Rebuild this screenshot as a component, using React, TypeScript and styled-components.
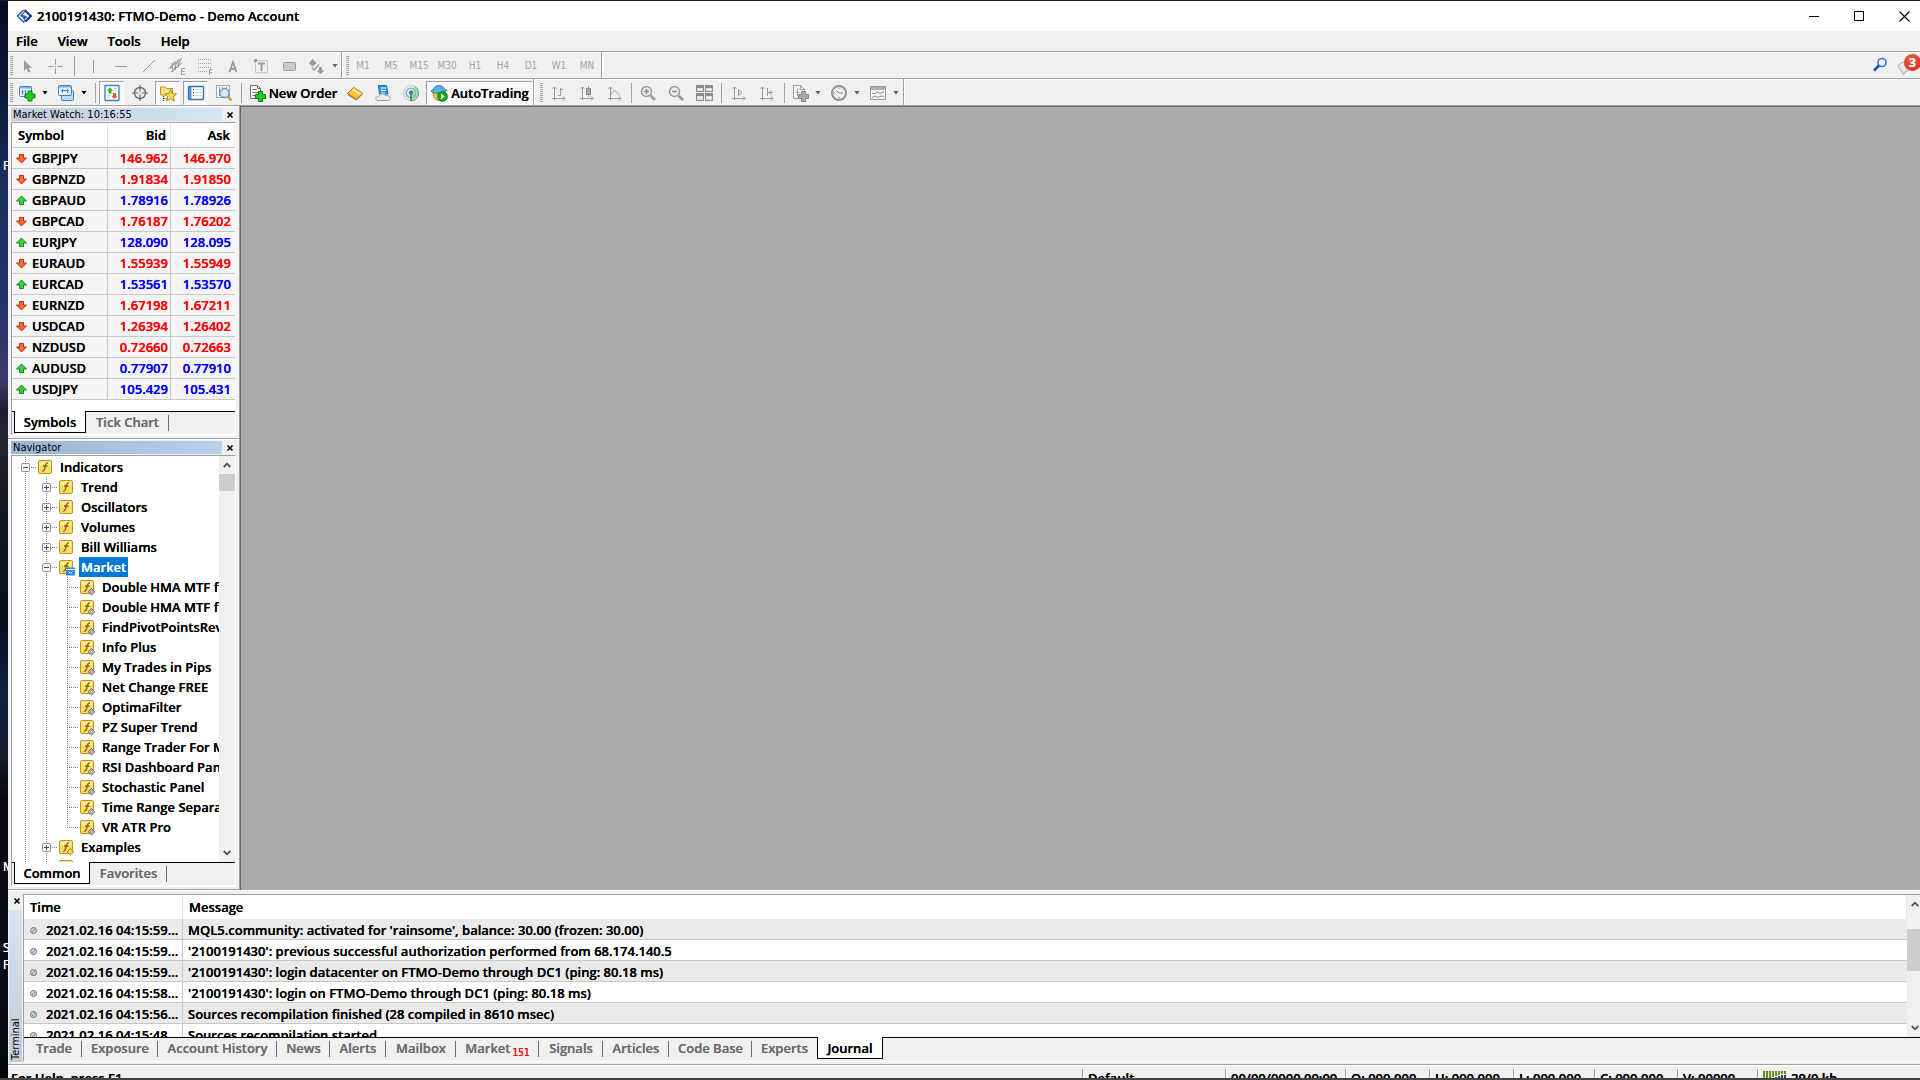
import React from "react";
import styled, { createGlobalStyle, css } from "styled-components";

const face = "#f0f0f0";
const edge = "#a0a0a0";
const uiFont = '"Open Sans", "Noto Sans", sans-serif';
const smallFont = '"DejaVu Sans Condensed", "DejaVu Sans", sans-serif';

const GlobalStyle = createGlobalStyle`
  *, *::before, *::after { box-sizing: border-box; }
  body { margin: 0; overflow: hidden; }
  button { font: inherit; color: inherit; text-shadow: inherit; background: none; border: 0; padding: 0; margin: 0; }
  svg { display: block; flex: none; }
`;

/* ---------- frame ---------- */

const Screen = styled.div`
  height: 100vh;
  display: grid;
  grid-template-columns: 8px minmax(0, 1fr);
  grid-template-rows: minmax(0, 1fr) 2px;
  padding-top: 1px;
  background: #1a1c2b;
  font: 600 13px/20px ${uiFont};
  color: #000;
  text-shadow: 0 0 currentColor;
  overflow: hidden;
`;

const Desktop = styled.div`
  position: relative;
  overflow: hidden;
  background: linear-gradient(#060d22 0%, #0b1a3c 9%, #1b3160 18%, #22336b 28%, #3d3b6b 35%, #1c1f2e 38%, #232734 41%, #151926 45%, #070e20 58%, #0c2040 64%, #151c2c 70%, #05080f 74%, #0a0d16 88%, #05070c 100%);
`;

const DesktopLabel = styled.span<{ $top: string }>`
  position: absolute;
  left: 3px;
  top: ${(p) => p.$top};
  font: 400 12px/16px ${uiFont};
  color: #fff;
`;

const Taskbar = styled.div`
  grid-column: 1 / -1;
  background: #434345;
`;

const Window = styled.div`
  display: flex;
  flex-direction: column;
  min-height: 0;
  background: ${face};
`;

const TitleBar = styled.header`
  display: flex;
  align-items: center;
  height: 30px;
  flex: none;
  padding: 0 0 0 8px;
  background: #fff;
`;

const Title = styled.h1`
  flex: 1;
  margin: 0 0 0 4px;
  font: inherit;
`;

const CaptionButton = styled.button<{ $last?: boolean }>`
  display: flex;
  align-items: center;
  justify-content: ${(p) => (p.$last ? "flex-start" : "center")};
  width: ${(p) => (p.$last ? 39 : 45)}px;
  padding-left: ${(p) => (p.$last ? 18 : 0)}px;
  height: 30px;
`;

const MenuBar = styled.nav`
  display: flex;
  gap: 20px;
  height: 20px;
  flex: none;
  padding-left: 8px;
  line-height: 20px;
`;

/* ---------- toolbars ---------- */

const ToolRow = styled.div`
  display: flex;
  flex: none;
  height: 27px;
  border-top: 1px solid ${edge};
  box-shadow: inset 0 1px #fff;
`;

const ToolGroup = styled.div<{ $gap?: number; $start?: number }>`
  display: flex;
  align-items: center;
  gap: ${(p) => p.$gap ?? 0}px;
  padding: 1px 0 0 ${(p) => p.$start ?? 2}px;
  border-right: 1px solid ${edge};
  box-shadow: 1px 0 #fff;
`;

const Grip = styled.span`
  width: 3px;
  height: 20px;
  background: repeating-linear-gradient(#a0a0a0 0 1px, transparent 1px 2px);
`;

const ToolSep = styled.span<{ $w: number }>`
  width: ${(p) => p.$w}px;
  height: 20px;
  background: linear-gradient(${edge}, ${edge}) center / 1px 100% no-repeat;
`;

const ToolButton = styled.button<{ $w: number; $pressed?: boolean }>`
  display: flex;
  align-items: center;
  justify-content: center;
  gap: 3px;
  width: ${(p) => p.$w}px;
  height: 24px;
  ${(p) =>
    p.$pressed &&
    css`
      border: 1px solid;
      border-color: ${edge} #fff #fff ${edge};
      background: repeating-conic-gradient(#fff 0 25%, ${face} 0 50%) 0 0 / 2px 2px;
    `}
`;

const PeriodButton = styled(ToolButton)`
  font: 400 10px/14px ${smallFont};
  color: #a6a6a6;
  text-shadow: none;
`;

const Split = styled.span`
  display: flex;
`;

const RowEnd = styled.div`
  display: flex;
  align-items: center;
  gap: 7px;
  margin-left: auto;
`;

const BadgeIcon = styled.button`
  position: relative;
  width: 22px;
  height: 24px;
  overflow: hidden;
`;

const Badge = styled.span`
  position: absolute;
  left: 6px;
  top: 1px;
  width: 17px;
  height: 17px;
  border-radius: 50%;
  background: radial-gradient(circle at 40% 30%, #f0614a, #d4220e);
  color: #fff;
  font: 700 12px/17px ${uiFont};
  text-align: center;
`;

/* ---------- docked panels ---------- */

const Work = styled.div`
  display: flex;
  flex: 1;
  min-height: 0;
`;

const Dock = styled.aside`
  display: flex;
  flex-direction: column;
  width: 231px;
  flex: none;
  border-top: 1px solid ${edge};
`;

const Canvas = styled.main`
  flex: 1;
  border: solid ${edge};
  border-width: 1px 0 0 1px;
  background: #ababab;
  box-shadow: inset 1px 1px #696969;
`;

const Panel = styled.section<{ $fill?: boolean }>`
  display: flex;
  flex-direction: column;
  flex: ${(p) => (p.$fill ? "1" : "none")};
  min-height: 0;
  padding: 2px 3px;
  border-bottom: 1px solid ${edge};
  box-shadow: inset 0 1px #fff;
`;

const PanelHead = styled.div`
  display: flex;
  height: 13px;
  margin-bottom: 1px;
`;

const PanelTitle = styled.h2<{ $active?: boolean }>`
  flex: 1;
  margin: 0;
  padding-left: 2px;
  font: 400 11px/13px ${smallFont};
  text-shadow: none;
  background: ${(p) => (p.$active ? "linear-gradient(90deg, #99b4d1, #b9d1ea)" : "linear-gradient(90deg, #bfcddb, #d7e4f2)")};
`;

const PanelClose = styled.button`
  display: flex;
  align-items: center;
  justify-content: flex-end;
  width: 12px;
  height: 13px;
  margin-right: 2px;
`;

const PanelBody = styled.div<{ $fill?: boolean }>`
  display: flex;
  flex-direction: column;
  flex: ${(p) => (p.$fill ? "1" : "none")};
  min-height: 0;
  border: 1px solid ${edge};
  border-right-color: #fff;
  border-bottom: 2px solid #fff;
`;

const TabStrip = styled.div<{ $h?: number }>`
  display: flex;
  flex: none;
  height: ${(p) => p.$h ?? 23}px;
  padding-left: 2px;
  background: linear-gradient(#000, #000) 0 0 / 100% 1px no-repeat;
`;

const Tab = styled.button<{ $w: number; $active?: boolean; $bare?: boolean }>`
  display: flex;
  align-items: center;
  justify-content: center;
  gap: 2px;
  width: ${(p) => p.$w}px;
  height: 22px;
  color: #6d6d6d;
  background: ${(p) => (p.$bare ? "none" : "linear-gradient(#6d6d6d, #6d6d6d) right 4px / 1px 16px no-repeat")};
  ${(p) =>
    p.$active &&
    css`
      color: #000;
      background: #fff;
      border: solid #000;
      border-width: 0 1px 1px;
    `}
`;

const TabCount = styled.span`
  align-self: flex-end;
  font: 400 10px/12px ${smallFont};
  color: #f00;
`;

/* ---------- market watch ---------- */

const QuoteArea = styled.div`
  background: #fff;
  padding-bottom: 11px;
`;

const QuoteTable = styled.table`
  width: 223px;
  table-layout: fixed;
  border-collapse: separate;
  border-spacing: 0;
  line-height: 20px;
  text-align: right;

  th {
    height: 25px;
    padding: 0 4px 0 6px;
    font-weight: 600;
    border-right: 1px solid #e5e5e5;
    border-bottom: 1px solid #c8c8c8;
  }
  th:first-child, td:first-child { text-align: left; }
  td {
    height: 21px;
    padding: 0 2px 0 4px;
    background: #f4f4f4;
    border-right: 1px solid #c8c8c8;
    border-bottom: 1px solid #c8c8c8;
  }
  td:last-child { border-right: 0; padding-right: 4px; }
`;

const SymbolCell = styled.span`
  display: flex;
  align-items: center;
  gap: 5px;
`;

const Price = styled.td<{ $up: boolean }>`
  color: ${(p) => (p.$up ? "#0000ff" : "#ff0000")};
`;

/* ---------- navigator ---------- */

const TreeArea = styled.div`
  display: flex;
  flex: 1;
  min-height: 0;
  background: #fff;
`;

const Tree = styled.ul`
  flex: 1;
  min-width: 0;
  margin: 0;
  padding: 1px 0 0 3px;
  list-style: none;
  overflow: hidden;
`;

const TreeRow = styled.li`
  display: flex;
  align-items: center;
  height: 20px;
  white-space: nowrap;
`;

const dotsV = "repeating-linear-gradient(#808080 0 1px, transparent 1px 2px)";
const dotsH = "repeating-linear-gradient(90deg, #808080 0 1px, transparent 1px 2px)";

const Guide = styled.span<{ $branch?: boolean; $end?: boolean }>`
  display: flex;
  align-items: center;
  justify-content: center;
  flex: none;
  width: 21px;
  height: 20px;
  background:
    ${dotsV} 10px 0 / 1px ${(p) => (p.$end ? "10px" : "100%")} no-repeat
    ${(p) => (p.$branch ? `, ${dotsH} 10px 10px / 11px 1px no-repeat` : "")};
`;

const TreeIcon = styled.span`
  flex: none;
  margin-left: 1px;
`;

const TreeLabel = styled.span<{ $selected?: boolean }>`
  margin-left: 4px;
  padding: 0 2px;
  ${(p) => p.$selected && "background: #0078d7; color: #fff;"}
`;

const ScrollBar = styled.div<{ $w: number }>`
  display: flex;
  flex-direction: column;
  justify-content: space-between;
  flex: none;
  width: ${(p) => p.$w}px;
  background: ${face};
  overflow: hidden;
`;

const ScrollButton = styled.button`
  display: flex;
  align-items: center;
  justify-content: center;
  width: 16px;
  height: 18px;
`;

const ScrollThumb = styled.div<{ $h: number; $before?: number }>`
  height: ${(p) => p.$h}px;
  margin-top: ${(p) => p.$before ?? 0}px;
  margin-bottom: auto;
  background: #cdcdcd;
`;

/* ---------- terminal ---------- */

const Terminal = styled.section`
  display: flex;
  flex: none;
  height: 175px;
  padding: 4px 0 2px;
  box-shadow: inset 0 1px #fff;
  border-bottom: 1px solid ${edge};
`;

const TerminalSide = styled.div`
  display: flex;
  flex-direction: column;
  align-items: center;
  width: 15px;
  gap: 3px;
`;

const TerminalTitle = styled.h2`
  flex: 1;
  width: 13px;
  margin: 0;
  padding-top: 2px;
  writing-mode: vertical-rl;
  transform: rotate(180deg);
  font: 400 11px/13px ${smallFont};
  text-shadow: none;
  background: linear-gradient(#bfcddb, #d7e4f2);
`;

const TerminalBody = styled.div`
  display: flex;
  flex-direction: column;
  flex: 1;
  min-width: 0;
  border-left: 1px solid ${edge};
  border-top: 1px solid ${edge};
  border-bottom: 1px solid #fff;
`;

const JournalArea = styled.div`
  display: flex;
  flex: 1;
  min-height: 0;
  background: #fff;
`;

const JournalScroll = styled.div`
  flex: 1;
  min-width: 0;
  overflow: hidden;
`;

const JournalTable = styled.table`
  width: 100%;
  table-layout: fixed;
  border-collapse: separate;
  border-spacing: 0;
  text-align: left;
  white-space: nowrap;

  th {
    height: 24px;
    padding: 0 6px;
    font-weight: 600;
    border-right: 1px solid #e5e5e5;
  }
  td {
    height: 21px;
    padding: 2px 5px 0;
    line-height: 18px;
    border-bottom: 1px solid #c8c8c8;
  }
  td:first-child { border-right: 1px solid #c8c8c8; padding: 2px 0 0 6px; }
  tbody tr:nth-child(odd) td { background: #eaeaea; }
`;

const TimeCell = styled.span`
  display: flex;
  align-items: center;
  gap: 9px;
`;

/* ---------- status bar ---------- */

const StatusBar = styled.footer`
  display: flex;
  flex: none;
  height: 13px;
  box-shadow: inset 0 1px #fff;
  overflow: hidden;
`;

const StatusCell = styled.span<{ $w?: number }>`
  display: flex;
  gap: 4px;
  flex: ${(p) => (p.$w ? `0 0 ${p.$w}px` : "1")};
  height: 22px;
  margin-top: 4px;
  padding: 0 5px 0 3px;
  line-height: 18px;
  white-space: nowrap;
  ${(p) =>
    p.$w &&
    css`
      padding-left: 5px;
      border-left: 1px solid ${edge};
      box-shadow: inset 1px 0 #fff;
    `}
`;

/* ---------- drawings ---------- */

const G = "#9b9b9b";

const Svg = ({ w = 18, h = 18, children }: { w?: number; h?: number; children: React.ReactNode }) => (
  <svg width={w} height={h} viewBox={`0 0 ${w} ${h}`} fill="none" aria-hidden="true">
    {children}
  </svg>
);

const Logo = () => (
  <Svg w={17} h={14}>
    <path d="M7.500 1 L1.500 7 L7.500 13 L9.500 11" stroke="#2f62b5" strokeWidth="1.500" />
    <path d="M8.500 1 L14.800 7 L9.500 12.500" stroke="#1f3f8f" strokeWidth="2.400" />
    <path d="M4.500 7 L8.500 3 M8 10.500 L11 7.500" stroke="#2f62b5" strokeWidth="1.200" />
    <path d="M5 7 H8.500 M7 9.500 L9.500 7" stroke="#1f3f8f" strokeWidth="1.400" />
  </Svg>
);

const Caret = ({ dim }: { dim?: boolean }) => (
  <Svg w={6} h={4}>
    <path d="M0.500 0 H5.500 L3 3.500 Z" fill={dim ? "#5a5a5a" : "#000"} />
  </Svg>
);

const Cross = () => (
  <Svg w={8} h={8}>
    <path d="M1.500 1.500 L6.500 6.500 M6.500 1.500 L1.500 6.500" stroke="#000" strokeWidth="1.600" />
  </Svg>
);

const Chevron = ({ down }: { down?: boolean }) => (
  <Svg w={8} h={6}>
    <path d={down ? "M0.700 1 L4 4.300 L7.300 1" : "M0.700 5 L4 1.700 L7.300 5"} stroke="#505050" strokeWidth="1.800" />
  </Svg>
);

const GreenPlus = ({ x, y, c = "#1fd21f", s = "#087a12" }: { x: number; y: number; c?: string; s?: string }) => (
  <path d={`M${x + 3.5} ${y + 0.5} h4 v3 h3 v4 h-3 v3 h-4 v-3 h-3 v-4 h3 Z`} fill={c} stroke={s} />
);

const axes = "M4.500 3 V16 M2.500 5 L4.500 3 L6.500 5 M2 14.500 H15 M13 12.500 L15 14.500 L13 16.500";

const icons: Record<string, React.ReactNode> = {
  cursor: <path d="M6 3 V14 L8.500 11.500 L10.500 15.500 L12.500 14.500 L10.500 11 H14 Z" fill={G} />,
  cross: <path d="M9.500 2 V7.500 M9.500 11.500 V17 M2 9.500 H7.500 M11.500 9.500 H17 M9 9.500 h1" stroke={G} />,
  vline: <path d="M9.500 3 V16" stroke={G} />,
  hline: <path d="M3 9.500 H15" stroke={G} />,
  trend: <path d="M3 15 L15 3" stroke={G} />,
  channel: (
    <>
      <path d="M1 11 L14 1 M3 15 L14 6 M4 6 L5 15 M7 4 L7.500 13 M10 2 L10.500 10 M2.500 12 L6 5 M6 13 L9.500 4 M9 11 L13 2" stroke={G} />
      <path d="M17 11.500 H13.500 V17.500 H17 M13.500 14.500 H16.500" stroke={G} />
    </>
  ),
  fibo: (
    <>
      <path d="M2 2.500 H16 M2 6.500 H16 M2 10.500 H16 M2 14.500 H11" stroke={G} strokeDasharray="1 1" />
      <path d="M16.500 12.500 H13.500 V18 M13.500 15.500 H16" stroke={G} />
    </>
  ),
  textA: <path d="M5.500 15 L9 5 L12.500 15 M6.500 12 H11.500" stroke={G} strokeWidth="1.800" />,
  textT: (
    <>
      <rect x="3.500" y="3.500" width="12" height="12" stroke={G} strokeDasharray="1 1" />
      <path d="M6 6.500 H13 M9.500 6.500 V14" stroke={G} strokeWidth="2" />
      <path d="M2 2h3v3h-3z" fill={G} />
    </>
  ),
  rect: <rect x="3.500" y="5.500" width="12" height="8" rx="1" fill="#c9c9c9" stroke={G} />,
  arrows: (
    <>
      <path d="M5.500 2 L9.500 6 L5.500 9.500 L2 6 Z M13.500 9.500 V17 M13.500 17 L9.500 13.500 H17.500 Z" fill={G} />
      <path d="M5 10.500 L7 13 L12 7.500" stroke={G} strokeWidth="1.400" />
      <path d="M12 10h3v4h-3z" fill={G} />
    </>
  ),
  bars: <path d={`${axes} M10.500 4 V12 M10.500 5.500 H13 M8 11.500 H10.500`} stroke={G} />,
  candles: (
    <>
      <path d={`${axes} M10.500 2 V13`} stroke={G} />
      <rect x="8.500" y="4.500" width="4" height="6" fill="#aaa" stroke="#888" />
    </>
  ),
  line: <path d={`${axes} M4.500 11 C7 6 9 6 10.500 8 S13 11 14 11`} stroke={G} />,
  shift: <path d={`${axes} M8.500 5.500 V11.500 L12 8.500 Z`} stroke={G} />,
  scroll: <path d={`${axes} M9.500 4 V12 M10 8.500 H15 M13.500 6 L11 8.500 L13.500 11`} stroke={G} />,
  zoomIn: (
    <>
      <circle cx="7.500" cy="7.500" r="5" fill="#ededed" stroke={G} strokeWidth="1.500" />
      <path d="M5 7.500 H10 M7.500 5 V10" stroke="#888" strokeWidth="1.500" />
      <path d="M11.500 11.500 L16 16" stroke={G} strokeWidth="2.600" />
    </>
  ),
  zoomOut: (
    <>
      <circle cx="7.500" cy="7.500" r="5" fill="#ededed" stroke={G} strokeWidth="1.500" />
      <path d="M5 7.500 H10" stroke="#888" strokeWidth="1.500" />
      <path d="M11.500 11.500 L16 16" stroke={G} strokeWidth="2.600" />
    </>
  ),
  tile: (
    <>
      <path d="M1 1h8v7h-8z M10 1h8v7h-8z M1 9h8v8h-8z M10 9h8v8h-8z" fill="#8c8c8c" />
      <path d="M2 4h6v3h-6z M11 4h6v3h-6z M2 12h6v4h-6z M11 12h6v4h-6z" fill="#dcdcdc" />
      <path d="M3 5.500h4 M12 5.500h4 M3 13.500h4 M12 13.500h4" stroke="#fff" />
    </>
  ),
  addInd: (
    <>
      <path d="M2.500 1.500 H9.500 L13.500 5.500 V14.500 H2.500 Z" fill="#f6f6f6" stroke={G} />
      <path d="M9.500 1.500 V5.500 H13.500 M8.500 5 C6 4 6.500 7 6.500 12 M4.500 8.500 H8.500" stroke={G} />
      <GreenPlus x={7} y={7} c="#a6a6a6" s="#858585" />
    </>
  ),
  clock: (
    <>
      <circle cx="9" cy="9" r="7" fill="#efefef" stroke="#939393" strokeWidth="2" />
      <path d="M9 9 L6 6 M9 9 H13 M9 3.500v1.500 M9 13v1.500 M3.500 9H5" stroke="#888" />
    </>
  ),
  template: (
    <>
      <rect x="1.500" y="2.500" width="15" height="13" fill="#f6f6f6" stroke={G} />
      <path d="M2 3h14v3h-14z" fill="#b0b0b0" />
      <path d="M3 9.500 L6 9.500 L8 8 L11 9.500 L15 7.500 M3 13.500 L6 12 L9 13.500 L12 12 L15 12.500" stroke="#8c8c8c" />
    </>
  ),
  newChart: (
    <>
      <rect x="1.500" y="2.500" width="12" height="10" rx="1" fill="#e9f3fb" stroke="#3f82bd" />
      <path d="M2 3h11v1.500h-11z" fill="#7db2de" />
      <path d="M4.500 6v5 M3.500 8h3 M7.500 6v4" stroke="#4a86bb" />
      <GreenPlus x={6.5} y={6.5} />
    </>
  ),
  profiles: (
    <>
      <rect x="4.500" y="6.500" width="12" height="10" rx="1" fill="#bcdcf5" stroke="#3f82bd" />
      <rect x="1.500" y="1.500" width="13" height="10" rx="1" fill="#e9f3fb" stroke="#3f82bd" />
      <path d="M2 2h12v1.500h-12z" fill="#7db2de" />
      <path d="M4 6.500h8 M5.500 5v4 M10.500 5v4" stroke="#4a86bb" />
    </>
  ),
  market: (
    <>
      <rect x="2" y="1.500" width="14" height="15" rx="1" fill="#fff" stroke="#3f7fc0" strokeWidth="1.400" />
      <path d="M7 3.500 L10 6.500 H8.500 V9.500 H5.500 V6.500 H4 Z" fill="#1fb52b" />
      <path d="M11.500 15 L14.500 12 H13 V9 H10 V12 H8.500 Z" fill="#f0552a" />
      <path d="M11 4.500h3 M11 6.500h3 M4 11.500h3 M4 13.500h3" stroke="#b9cfe4" />
    </>
  ),
  target: (
    <>
      <circle cx="9" cy="9" r="5.500" stroke="#666" strokeWidth="1.400" />
      <path d="M9 1 V7.500 M9 10.500 V17 M1 9 H7.500 M10.500 9 H17" stroke="#666" strokeWidth="1.200" />
    </>
  ),
  navigator: (
    <>
      <path d="M1.500 3 H6 L7.500 4.500 H13.500 V11 H1.500 Z" fill="#f9e08a" stroke="#c29422" />
      <path d="M4.500 12 V17 M4.500 14.500 H8" stroke="#333" strokeDasharray="1 1" />
      <path d="M11.500 5.500 L13.200 9.500 L17.500 9.900 L14.300 12.700 L15.300 17 L11.500 14.700 L7.700 17 L8.700 12.700 L5.500 9.900 L9.800 9.500 Z" fill="#ffd84d" stroke="#b58a20" />
    </>
  ),
  terminal: (
    <>
      <rect x="1.500" y="2.500" width="15" height="13" rx="1" fill="#fff" stroke="#2f74bd" strokeWidth="1.400" />
      <path d="M2 3h2.500v12h-2.500z" fill="#4f93d5" />
      <path d="M6 5.500h1 M6 11.500h1" stroke="#e03030" />
      <path d="M6 8.500h1" stroke="#333" />
      <path d="M8 5.500h7 M8 8.500h7 M8 11.500h7" stroke="#cdd9e6" />
    </>
  ),
  tester: (
    <>
      <rect x="1.500" y="1.500" width="13" height="12" fill="#f4f7fa" stroke="#9aa7b5" />
      <path d="M4.500 3v9 M7.500 3v6 M11.500 3v4" stroke="#8496a8" />
      <circle cx="9.500" cy="9" r="4.500" fill="#cfe6f8" fillOpacity="0.800" stroke="#6fa0cc" strokeWidth="1.400" />
      <path d="M13 12.500 L16.500 16.500" stroke="#c99a2e" strokeWidth="2.400" />
    </>
  ),
  order: (
    <>
      <path d="M2.500 1.500 H9.500 L12.500 4.500 V14.500 H2.500 Z" fill="#fafafa" stroke="#6f6f6f" />
      <path d="M9.500 1.500 V4.500 H12.500 M4.500 5.500h4 M4.500 8.500h6 M4.500 11.500h4" stroke="#6f6f6f" />
      <GreenPlus x={7} y={7} />
    </>
  ),
  editor: (
    <>
      <path d="M1.500 9.500 L7.500 3.500 L16.500 9 L10.500 15.500 Z" fill="#f3c23c" stroke="#a8720f" />
      <path d="M7.500 4 L16 9.200 L13.500 11.500 L5.500 6 Z" fill="#ffe28a" />
      <path d="M2 11 L10.500 16 L16.500 10" stroke="#a8720f" />
    </>
  ),
  vps: (
    <>
      <path d="M4.500 1.500 H12.500 L14 10 H5.500 Z" fill="#2f9be8" stroke="#1570b8" />
      <path d="M7 4h5 M7 6.500h5 M7 9h4" stroke="#fff" />
      <path d="M4 16.500 C0.500 16 1.500 12 4.500 12.500 C5.500 9.500 10 9 11.500 11.500 C15.500 10.500 18 15.500 14.500 16.500 Z" fill="#e6edf5" stroke="#8ba0ba" />
    </>
  ),
  signals: (
    <>
      <circle cx="9" cy="9" r="7.500" stroke="#b4c6d6" />
      <circle cx="9" cy="9" r="4.800" stroke="#7d9fc0" strokeWidth="1.300" />
      <path d="M9 9 V17 C13 17 16.500 14 16.500 9 C16.500 6 15 3.500 13 2.500" fill="#8fd096" fillOpacity="0.700" stroke="#6db577" />
      <circle cx="9" cy="8.500" r="2.200" fill="#3f86c0" />
      <path d="M9 10 V17" stroke="#2c9440" strokeWidth="1.600" />
    </>
  ),
  auto: (
    <>
      <path d="M3 8 C3 14 6 16.500 9 16.500 C13 16.500 15 13 15 8 Z" fill="#f2c63f" stroke="#b08415" />
      <path d="M1 7 C4 6 4 1.500 9 1.500 S13.500 6 17 6 C15 10 3 10.500 1 7 Z" fill="#58b0dc" stroke="#2d7ca8" />
      <circle cx="12.500" cy="12.500" r="4.800" fill="#17a81f" stroke="#0b7a12" />
      <path d="M11 9.800 L15 12.500 L11 15.200 Z" fill="#fff" />
    </>
  ),
  search: (
    <>
      <circle cx="11" cy="6.500" r="4" fill="#eef5fd" stroke="#3b74d0" strokeWidth="1.600" />
      <path d="M8 9.500 L3 14.500" stroke="#1d4fb4" strokeWidth="2.600" />
    </>
  ),
};

const Icon = ({ name }: { name: string }) => <Svg>{icons[name]}</Svg>;

const QuoteArrow = ({ up }: { up: boolean }) => (
  <Svg w={11} h={11}>
    {up ? (
      <path d="M5.500 1 L10.500 6 H7.500 V9.500 H3.500 V6 H0.500 Z" fill="#3ccb45" stroke="#0d7d1c" strokeWidth="0.900" />
    ) : (
      <path d="M5.500 10 L10.500 5 H7.500 V1.500 H3.500 V5 H0.500 Z" fill="#fb6a35" stroke="#a8280c" strokeWidth="0.900" />
    )}
  </Svg>
);

type Mark = "none" | "shop" | "gray" | "gold";

const FunctionIcon = ({ mark }: { mark: Mark }) => (
  <Svg w={17} h={17}>
    <rect x="1.500" y="1.500" width="13" height="13" rx="1.500" fill="#f9dc62" stroke="#bf9426" />
    <path d="M2.500 2.500h11v4h-11z" fill="#fdeb9a" />
    <path d="M11 4 C8.500 3.500 8.500 6 8 8 S7 12.500 5 12 M6 7 H10.500" stroke="#8a6410" strokeWidth="1.300" />
    {mark === "gray" && <path d="M12.500 9.500 L15.800 12.800 L12.500 16 L9.200 12.800 Z" fill="#b5b5b5" stroke="#6b6b6b" />}
    {mark === "gold" && <path d="M12.500 9.500 L15.800 12.800 L12.500 16 L9.200 12.800 Z" fill="#fbd750" stroke="#a8790f" />}
    {mark === "shop" && (
      <>
        <path d="M8 8.500h9v8h-9z" fill="#2f86e0" />
        <path d="M8 10.500h9 M10.500 12.500 L12.500 14.500 L14.500 12.500" stroke="#fff" />
      </>
    )}
  </Svg>
);

const Expander = ({ open }: { open: boolean }) => (
  <Svg w={9} h={9}>
    <rect x="0.500" y="0.500" width="8" height="8" rx="1" fill="#fafafa" stroke="#8f8f8f" />
    <path d={open ? "M2 4.500 H7" : "M2 4.500 H7 M4.500 2 V7"} stroke="#2f4f9f" />
  </Svg>
);

const LogDot = () => (
  <Svg w={7} h={7}>
    <circle cx="3.500" cy="3.500" r="3" fill="#d0d0d0" stroke="#707070" />
    <path d="M2 5 L5 2" stroke="#888" />
  </Svg>
);

const TrafficBars = () => (
  <Svg w={24} h={20}>
    {[0, 3, 6, 9, 12, 15, 18, 21].map((x, i) => (
      <g key={x}>
        <path d={`M${x} 2h2v${[10, 9, 8, 6, 5, 4, 3, 3][i]}h-2z`} fill="#6b8e23" />
        {i > 3 && <path d={`M${x} ${[0, 0, 0, 0, 8, 7, 6, 6][i]}h2v12h-2z`} fill="#17486b" />}
      </g>
    ))}
  </Svg>
);

/* ---------- data ---------- */

const periods = ["M1", "M5", "M15", "M30", "H1", "H4", "D1", "W1", "MN"];

const quotes: [string, string, string, boolean][] = [
  ["GBPJPY", "146.962", "146.970", false],
  ["GBPNZD", "1.91834", "1.91850", false],
  ["GBPAUD", "1.78916", "1.78926", true],
  ["GBPCAD", "1.76187", "1.76202", false],
  ["EURJPY", "128.090", "128.095", true],
  ["EURAUD", "1.55939", "1.55949", false],
  ["EURCAD", "1.53561", "1.53570", true],
  ["EURNZD", "1.67198", "1.67211", false],
  ["USDCAD", "1.26394", "1.26402", false],
  ["NZDUSD", "0.72660", "0.72663", false],
  ["AUDUSD", "0.77907", "0.77910", true],
  ["USDJPY", "105.429", "105.431", true],
];

type Node = { label: string; level: number; mark: Mark; open?: boolean; selected?: boolean; end?: boolean };

const marketItems = [
  "Double HMA MTF f",
  "Double HMA MTF f",
  "FindPivotPointsRev",
  "Info Plus",
  "My Trades in Pips",
  "Net Change FREE",
  "OptimaFilter",
  "PZ Super Trend",
  "Range Trader For M",
  "RSI Dashboard Pan",
  "Stochastic Panel",
  "Time Range Separa",
  "VR ATR Pro",
];

const nodes: Node[] = [
  { label: "Indicators", level: 0, mark: "none", open: true },
  { label: "Trend", level: 1, mark: "none", open: false },
  { label: "Oscillators", level: 1, mark: "none", open: false },
  { label: "Volumes", level: 1, mark: "none", open: false },
  { label: "Bill Williams", level: 1, mark: "none", open: false },
  { label: "Market", level: 1, mark: "shop", open: true, selected: true },
  ...marketItems.map((label, i) => ({ label, level: 2, mark: "gray" as Mark, end: i === marketItems.length - 1 })),
  { label: "Examples", level: 1, mark: "gold", open: false },
  { label: "", level: 1, mark: "gray" },
];

const journal: [string, string][] = [
  ["2021.02.16 04:15:59...", "MQL5.community: activated for 'rainsome', balance: 30.00 (frozen: 30.00)"],
  ["2021.02.16 04:15:59...", "'2100191430': previous successful authorization performed from 68.174.140.5"],
  ["2021.02.16 04:15:59...", "'2100191430': login datacenter on FTMO-Demo through DC1 (ping: 80.18 ms)"],
  ["2021.02.16 04:15:58...", "'2100191430': login on FTMO-Demo through DC1 (ping: 80.18 ms)"],
  ["2021.02.16 04:15:56...", "Sources recompilation finished (28 compiled in 8610 msec)"],
  ["2021.02.16 04:15:48", "Sources recompilation started"],
];

const terminalTabs: { label: string; w: number; count?: string; bare?: boolean }[] = [
  { label: "Trade", w: 56 },
  { label: "Exposure", w: 76 },
  { label: "Account History", w: 119 },
  { label: "News", w: 53 },
  { label: "Alerts", w: 56 },
  { label: "Mailbox", w: 70 },
  { label: "Market", w: 83, count: "151" },
  { label: "Signals", w: 64 },
  { label: "Articles", w: 66 },
  { label: "Code Base", w: 83 },
  { label: "Experts", w: 65, bare: true },
];

const statusCells: [string, number][] = [
  ["Default", 143],
  ["00/00/0000 00:00", 120],
  ["O: 000.000", 84],
  ["H: 000.000", 84],
  ["L: 000.000", 81],
  ["C: 000.000", 83],
  ["V: 00000", 80],
];

/* ---------- app ---------- */

const Tool = ({ name, label, w = 28, pressed }: { name: string; label: string; w?: number; pressed?: boolean }) => (
  <ToolButton $w={w} $pressed={pressed} aria-label={label} aria-pressed={pressed}>
    <Icon name={name} />
  </ToolButton>
);

const DropTool = ({ name, label, dim }: { name: string; label: string; dim?: boolean }) => (
  <Split>
    <Tool name={name} label={label} w={22} />
    <ToolButton $w={14} aria-label={`${label} options`}>
      <Caret dim={dim} />
    </ToolButton>
  </Split>
);

export default function App() {
  return (
    <Screen>
      <GlobalStyle />
      <Desktop>
        <DesktopLabel $top="14.600%">F</DesktopLabel>
        <DesktopLabel $top="79.700%">M</DesktopLabel>
        <DesktopLabel $top="87.200%">S</DesktopLabel>
        <DesktopLabel $top="88.800%">F</DesktopLabel>
      </Desktop>
      <Window>
        <TitleBar>
          <Logo />
          <Title>2100191430: FTMO-Demo - Demo Account</Title>
          <CaptionButton aria-label="Minimize">
            <Svg w={10} h={10}><path d="M0 5.500 H10" stroke="#000" /></Svg>
          </CaptionButton>
          <CaptionButton aria-label="Maximize">
            <Svg w={10} h={10}><path d="M0.500 0.500 H9.500 V9.500 H0.500 Z" stroke="#000" /></Svg>
          </CaptionButton>
          <CaptionButton $last aria-label="Close">
            <Svg w={11} h={11}><path d="M0.500 0.500 L10.500 10.500 M10.500 0.500 L0.500 10.500" stroke="#000" strokeWidth="1.100" /></Svg>
          </CaptionButton>
        </TitleBar>
        <MenuBar>
          {["File", "View", "Tools", "Help"].map((m) => (
            <button key={m}>{m}</button>
          ))}
        </MenuBar>

        <ToolRow>
          <ToolGroup>
            <Grip />
            <Tool name="cursor" label="Cursor" />
            <Tool name="cross" label="Crosshair" />
            <ToolSep $w={10} />
            <Tool name="vline" label="Vertical line" />
            <Tool name="hline" label="Horizontal line" />
            <Tool name="trend" label="Trendline" />
            <Tool name="channel" label="Equidistant channel" />
            <Tool name="fibo" label="Fibonacci retracement" />
            <Tool name="textA" label="Text" />
            <Tool name="textT" label="Text label" />
            <Tool name="rect" label="Rectangle" />
            <Tool name="arrows" label="Arrows" w={26} />
            <ToolButton $w={12} aria-label="Arrows options">
              <Caret dim />
            </ToolButton>
          </ToolGroup>
          <ToolGroup $start={4}>
            <Grip />
            {periods.map((p) => (
              <PeriodButton key={p} $w={28}>{p}</PeriodButton>
            ))}
          </ToolGroup>
          <RowEnd>
            <ToolButton $w={22} aria-label="Search">
              <Icon name="search" />
            </ToolButton>
            <BadgeIcon aria-label="Notifications">
              <Svg w={22} h={24}>
                <path d="M3 17 L5.500 21.500 L8 18 C14 18 14 9 8 9 C0 9 -1 15 3 17 Z" fill="#e8e8ee" stroke="#a4a4ac" />
              </Svg>
              <Badge>3</Badge>
            </BadgeIcon>
          </RowEnd>
        </ToolRow>

        <ToolRow>
          <ToolGroup $gap={3}>
            <Grip />
            <DropTool name="newChart" label="New chart" />
            <DropTool name="profiles" label="Profiles" />
            <ToolSep $w={2} />
            <Tool name="market" label="Market Watch" w={25} pressed />
            <Tool name="target" label="Data window" w={25} />
            <Tool name="navigator" label="Navigator" w={25} pressed />
            <Tool name="terminal" label="Terminal" w={25} pressed />
            <Tool name="tester" label="Strategy tester" w={25} />
            <ToolSep $w={4} />
            <ToolButton $w={93}>
              <Icon name="order" />
              New Order
            </ToolButton>
            <Tool name="editor" label="MetaEditor" w={25} />
            <Tool name="vps" label="Virtual hosting" w={25} />
            <Tool name="signals" label="Signals" w={25} />
            <ToolButton $w={107} $pressed aria-pressed>
              <Icon name="auto" />
              AutoTrading
            </ToolButton>
          </ToolGroup>
          <ToolGroup $gap={3} $start={6}>
            <Grip />
            <Tool name="bars" label="Bar chart" w={25} />
            <Tool name="candles" label="Candlesticks" w={25} />
            <Tool name="line" label="Line chart" w={25} />
            <ToolSep $w={2} />
            <Tool name="zoomIn" label="Zoom in" w={25} />
            <Tool name="zoomOut" label="Zoom out" w={25} />
            <Tool name="tile" label="Tile windows" w={25} />
            <ToolSep $w={4} />
            <Tool name="shift" label="Auto scroll" w={25} />
            <Tool name="scroll" label="Chart shift" w={25} />
            <ToolSep $w={4} />
            <DropTool name="addInd" label="Indicators" dim />
            <DropTool name="clock" label="Periods" dim />
            <DropTool name="template" label="Templates" dim />
          </ToolGroup>
        </ToolRow>

        <Work>
          <Dock>
            <Panel>
              <PanelHead>
                <PanelTitle>Market Watch: 10:16:55</PanelTitle>
                <PanelClose aria-label="Close Market Watch"><Cross /></PanelClose>
              </PanelHead>
              <PanelBody>
                <QuoteArea>
                  <QuoteTable>
                    <colgroup>
                      <col style={{ width: 96 }} />
                      <col style={{ width: 63 }} />
                      <col />
                    </colgroup>
                    <thead>
                      <tr><th>Symbol</th><th>Bid</th><th>Ask</th></tr>
                    </thead>
                    <tbody>
                      {quotes.map(([s, bid, ask, up]) => (
                        <tr key={s}>
                          <td><SymbolCell><QuoteArrow up={up} />{s}</SymbolCell></td>
                          <Price $up={up}>{bid}</Price>
                          <Price $up={up}>{ask}</Price>
                        </tr>
                      ))}
                    </tbody>
                  </QuoteTable>
                </QuoteArea>
                <TabStrip>
                  <Tab $w={72} $active>Symbols</Tab>
                  <Tab $w={83}>Tick Chart</Tab>
                </TabStrip>
              </PanelBody>
            </Panel>
            <Panel $fill>
              <PanelHead>
                <PanelTitle $active>Navigator</PanelTitle>
                <PanelClose aria-label="Close Navigator"><Cross /></PanelClose>
              </PanelHead>
              <PanelBody $fill>
                <TreeArea>
                  <Tree>
                    {nodes.map((n, i) => (
                      <TreeRow key={i}>
                        {Array.from({ length: n.level }, (_, k) => <Guide key={k} />)}
                        <Guide $branch $end={n.end}>
                          {n.open !== undefined && <Expander open={n.open} />}
                        </Guide>
                        <TreeIcon><FunctionIcon mark={n.mark} /></TreeIcon>
                        {n.label && <TreeLabel $selected={n.selected}>{n.label}</TreeLabel>}
                      </TreeRow>
                    ))}
                  </Tree>
                  <ScrollBar $w={16}>
                    <ScrollButton aria-label="Scroll up"><Chevron /></ScrollButton>
                    <ScrollThumb $h={17} />
                    <ScrollButton aria-label="Scroll down"><Chevron down /></ScrollButton>
                  </ScrollBar>
                </TreeArea>
                <TabStrip>
                  <Tab $w={76} $active>Common</Tab>
                  <Tab $w={77}>Favorites</Tab>
                </TabStrip>
              </PanelBody>
            </Panel>
          </Dock>
          <Canvas />
        </Work>

        <Terminal>
          <TerminalSide>
            <PanelClose aria-label="Close Terminal"><Cross /></PanelClose>
            <TerminalTitle>Terminal</TerminalTitle>
          </TerminalSide>
          <TerminalBody>
            <JournalArea>
              <JournalScroll>
                <JournalTable>
                  <colgroup>
                    <col style={{ width: 159 }} />
                    <col />
                  </colgroup>
                  <thead>
                    <tr><th>Time</th><th>Message</th></tr>
                  </thead>
                  <tbody>
                    {journal.map(([time, msg], i) => (
                      <tr key={i}>
                        <td><TimeCell><LogDot />{time}</TimeCell></td>
                        <td>{msg}</td>
                      </tr>
                    ))}
                  </tbody>
                </JournalTable>
              </JournalScroll>
              <ScrollBar $w={13}>
                <ScrollButton aria-label="Scroll up"><Chevron /></ScrollButton>
                <ScrollThumb $h={42} $before={16} />
                <ScrollButton aria-label="Scroll down"><Chevron down /></ScrollButton>
              </ScrollBar>
            </JournalArea>
            <TabStrip $h={24}>
              {terminalTabs.map((t) => (
                <Tab key={t.label} $w={t.w} $bare={t.bare}>
                  {t.label}
                  {t.count && <TabCount>{t.count}</TabCount>}
                </Tab>
              ))}
              <Tab $w={66} $active>Journal</Tab>
            </TabStrip>
          </TerminalBody>
        </Terminal>

        <StatusBar>
          <StatusCell>For Help, press F1</StatusCell>
          {statusCells.map(([text, w]) => (
            <StatusCell key={text} $w={w}>{text}</StatusCell>
          ))}
          <StatusCell $w={163}>
            <TrafficBars />
            29/0 kb
          </StatusCell>
        </StatusBar>
      </Window>
      <Taskbar />
    </Screen>
  );
}
